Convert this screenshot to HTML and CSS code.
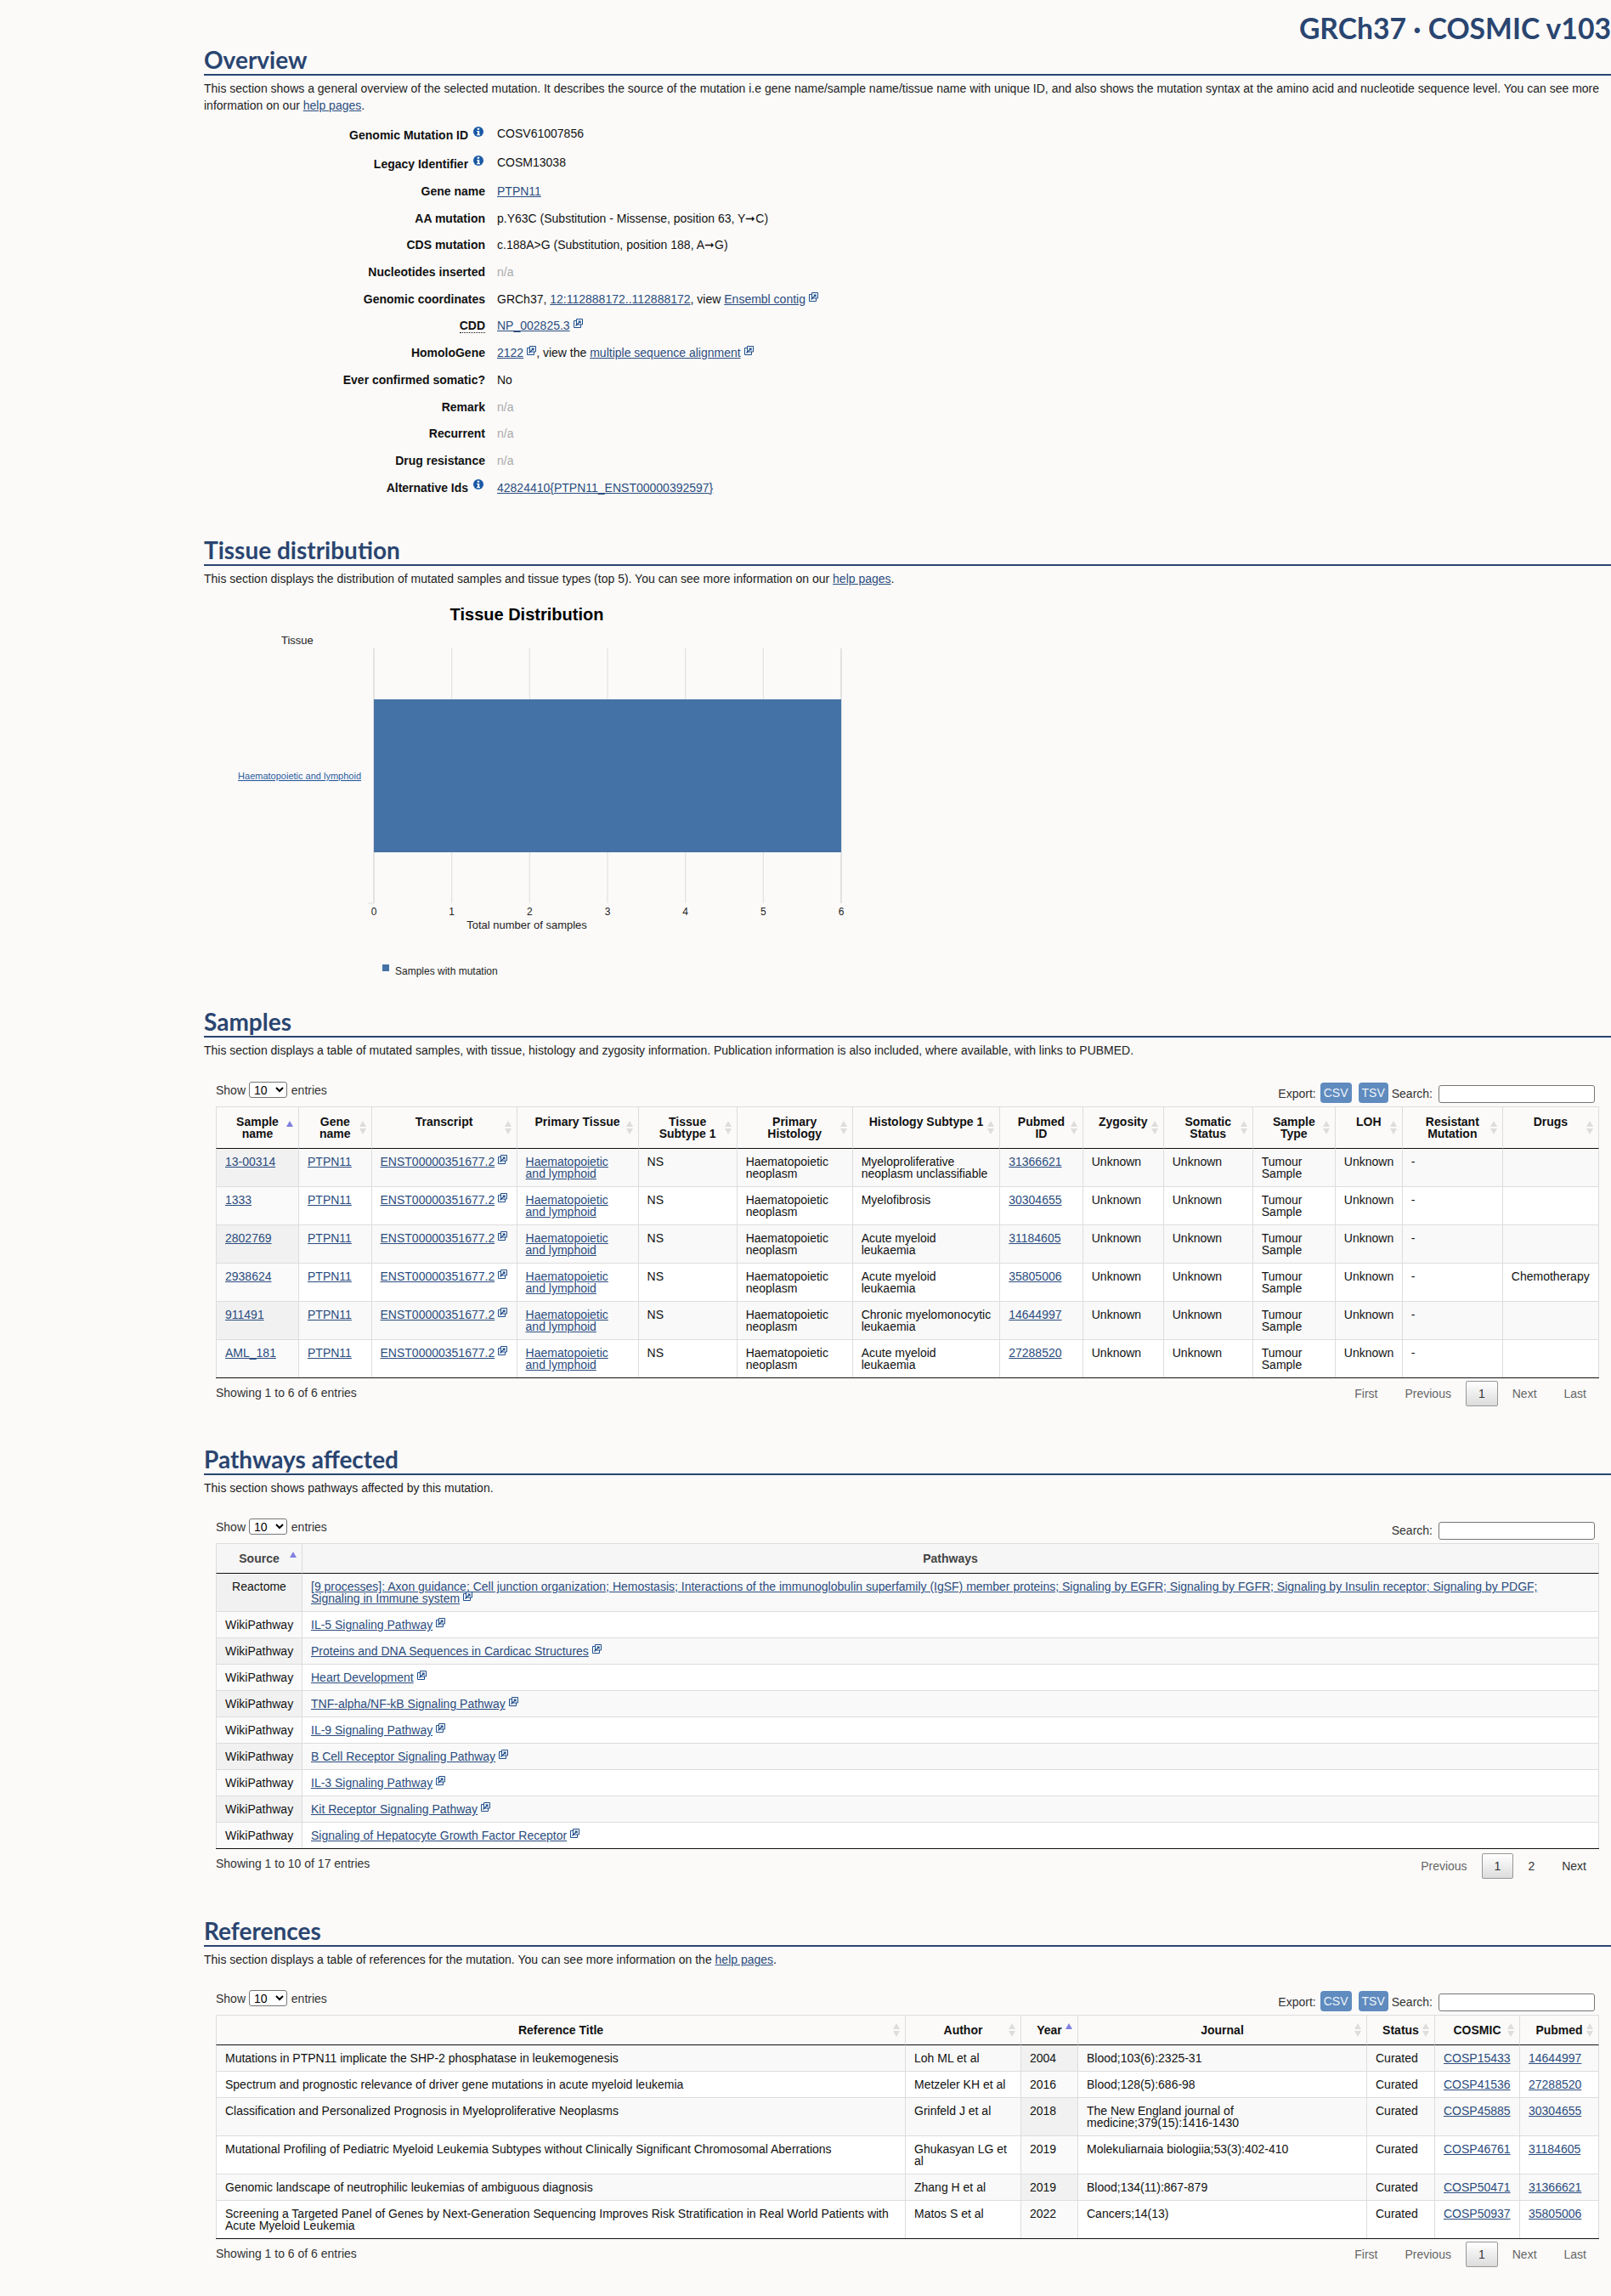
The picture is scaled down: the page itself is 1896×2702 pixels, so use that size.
FILE: index.html
```html
<!DOCTYPE html>
<html lang="en">
<head>
  <meta charset="UTF-8" />
  <title>COSMIC | Mutation overview</title>
  <link rel="stylesheet" href="styles.css">
</head>
<body>

<svg class="icon-defs" width="0" height="0">
  <symbol id="ext" viewBox="0 0 11 11">
    <path d="M5 2.5H.5v8h8V6" fill="none" stroke="#1f4f8c" stroke-width="1"/>
    <path d="M3.5 .5h7v6.5h-7z" fill="#fbfaf9" stroke="#1f4f8c" stroke-width="1"/>
    <path d="M2.5 8.5l5-5" fill="none" stroke="#1f4f8c" stroke-width="1.3"/>
    <path d="M5 2.4h3.6V6z" fill="#1f4f8c"/>
  </symbol>
  <symbol id="info" viewBox="0 0 12 12">
    <circle cx="6" cy="6" r="6" fill="#1a5aa5"/>
    <path d="M4.8 1.8h2.4v2H4.8zM4.2 4.9h3v4.2h.8v1.2H4.2V9.1h.8V6.1h-.8z" fill="#fff"/>
  </symbol>
</svg>

<div class="page">
  <div class="build">GRCh37 · COSMIC v103</div>

  <section>
    <h2>Overview</h2>
    <p class="intro">This section shows a general overview of the selected mutation. It describes the source of the mutation i.e gene name/sample name/tissue name with unique ID, and also shows the mutation syntax at the amino acid and nucleotide sequence level. You can see more information on our <a href="#">help pages</a>.</p>

    <dl class="facts">
      <dt class="tall">Genomic Mutation ID <svg class="info"><use href="#info"/></svg></dt>
      <dd class="tall">COSV61007856</dd>
      <dt class="tall">Legacy Identifier <svg class="info"><use href="#info"/></svg></dt>
      <dd class="tall">COSM13038</dd>
      <dt>Gene name</dt>
      <dd><a href="#">PTPN11</a></dd>
      <dt>AA mutation</dt>
      <dd>p.Y63C (Substitution - Missense, position 63, Y➞C)</dd>
      <dt>CDS mutation</dt>
      <dd>c.188A&gt;G (Substitution, position 188, A➞G)</dd>
      <dt>Nucleotides inserted</dt>
      <dd class="na">n/a</dd>
      <dt>Genomic coordinates</dt>
      <dd>GRCh37, <a href="#">12:112888172..112888172</a>, view <a href="#">Ensembl contig</a><svg class="ext"><use href="#ext"/></svg></dd>
      <dt><abbr>CDD</abbr></dt>
      <dd><a href="#">NP_002825.3</a><svg class="ext"><use href="#ext"/></svg></dd>
      <dt>HomoloGene</dt>
      <dd><a href="#">2122</a><svg class="ext"><use href="#ext"/></svg>, view the <a href="#">multiple sequence alignment</a><svg class="ext"><use href="#ext"/></svg></dd>
      <dt>Ever confirmed somatic?</dt>
      <dd>No</dd>
      <dt>Remark</dt>
      <dd class="na">n/a</dd>
      <dt>Recurrent</dt>
      <dd class="na">n/a</dd>
      <dt>Drug resistance</dt>
      <dd class="na">n/a</dd>
      <dt>Alternative Ids <svg class="info"><use href="#info"/></svg></dt>
      <dd><a href="#">42824410{PTPN11_ENST00000392597}</a></dd>
    </dl>
  </section>

  <section class="tissue-section">
    <h2>Tissue distribution</h2>
    <p class="intro">This section displays the distribution of mutated samples and tissue types (top 5). You can see more information on our <a href="#">help pages</a>.</p>

    <svg class="chart" viewBox="240 700 800 470" width="800" height="470">
      <text class="chart-title" x="620" y="730" text-anchor="middle">Tissue Distribution</text>
      <text class="chart-label" x="331" y="758">Tissue</text>
      <g class="grid">
        <line class="edge" x1="440" y1="763" x2="440" y2="1063"/>
        <line x1="531.7" y1="763" x2="531.7" y2="1063"/>
        <line x1="623.3" y1="763" x2="623.3" y2="1063"/>
        <line x1="715" y1="763" x2="715" y2="1063"/>
        <line x1="806.7" y1="763" x2="806.7" y2="1063"/>
        <line x1="898.3" y1="763" x2="898.3" y2="1063"/>
        <line class="edge" x1="990" y1="763" x2="990" y2="1063"/>
        <line x1="433" y1="1063" x2="440" y2="1063"/>
      </g>
      <rect class="bar" x="440" y="823" width="550" height="180"/>
      <a href="#"><text class="chart-link" x="425" y="917" text-anchor="end">Haematopoietic and lymphoid</text></a>
      <g class="chart-tick" text-anchor="middle">
        <text x="440" y="1077">0</text>
        <text x="531.7" y="1077">1</text>
        <text x="623.3" y="1077">2</text>
        <text x="715" y="1077">3</text>
        <text x="806.7" y="1077">4</text>
        <text x="898.3" y="1077">5</text>
        <text x="990" y="1077">6</text>
      </g>
      <text class="chart-label" x="620" y="1093" text-anchor="middle">Total number of samples</text>
      <rect class="bar" x="450" y="1135" width="8" height="8"/>
      <text class="chart-legend" x="465" y="1147">Samples with mutation</text>
    </svg>
  </section>

  <section class="samples-section">
    <h2>Samples</h2>
    <p class="intro">This section displays a table of mutated samples, with tissue, histology and zygosity information. Publication information is also included, where available, with links to PUBMED.</p>

    <div class="dt dt-samples">
      <div class="dt-top">
        <label class="dt-length">Show <select><option>10</option></select> entries</label>
        <div class="dt-tools">
          <span>Export:</span><a class="btn" href="#">CSV</a><a class="btn" href="#">TSV</a>
          <label class="dt-search">Search:</label><input type="text">
        </div>
      </div>
      <table class="samples-table">
        <colgroup><col><col><col><col><col><col><col><col><col><col><col><col><col><col></colgroup>
        <thead>
          <tr>
            <th class="sort-asc">Sample name</th><th class="sort">Gene name</th><th class="sort">Transcript</th><th class="sort">Primary Tissue</th><th class="sort">Tissue Subtype 1</th><th class="sort">Primary Histology</th><th class="sort">Histology Subtype 1</th><th class="sort">Pubmed<br>ID</th><th class="sort">Zygosity</th><th class="sort">Somatic Status</th><th class="sort">Sample Type</th><th class="sort">LOH</th><th class="sort">Resistant Mutation</th><th class="sort">Drugs</th>
          </tr>
        </thead>
        <tbody>
          <tr>
            <td class="sorted"><a href="#">13-00314</a></td><td><a href="#">PTPN11</a></td><td><a href="#">ENST00000351677.2</a><svg class="ext"><use href="#ext"/></svg></td><td><a href="#">Haematopoietic and lymphoid</a></td><td>NS</td><td>Haematopoietic neoplasm</td><td>Myeloproliferative neoplasm unclassifiable</td><td><a href="#">31366621</a></td><td>Unknown</td><td>Unknown</td><td>Tumour Sample</td><td>Unknown</td><td>-</td><td></td>
          </tr>
          <tr>
            <td class="sorted"><a href="#">1333</a></td><td><a href="#">PTPN11</a></td><td><a href="#">ENST00000351677.2</a><svg class="ext"><use href="#ext"/></svg></td><td><a href="#">Haematopoietic and lymphoid</a></td><td>NS</td><td>Haematopoietic neoplasm</td><td>Myelofibrosis</td><td><a href="#">30304655</a></td><td>Unknown</td><td>Unknown</td><td>Tumour Sample</td><td>Unknown</td><td>-</td><td></td>
          </tr>
          <tr>
            <td class="sorted"><a href="#">2802769</a></td><td><a href="#">PTPN11</a></td><td><a href="#">ENST00000351677.2</a><svg class="ext"><use href="#ext"/></svg></td><td><a href="#">Haematopoietic and lymphoid</a></td><td>NS</td><td>Haematopoietic neoplasm</td><td>Acute myeloid leukaemia</td><td><a href="#">31184605</a></td><td>Unknown</td><td>Unknown</td><td>Tumour Sample</td><td>Unknown</td><td>-</td><td></td>
          </tr>
          <tr>
            <td class="sorted"><a href="#">2938624</a></td><td><a href="#">PTPN11</a></td><td><a href="#">ENST00000351677.2</a><svg class="ext"><use href="#ext"/></svg></td><td><a href="#">Haematopoietic and lymphoid</a></td><td>NS</td><td>Haematopoietic neoplasm</td><td>Acute myeloid leukaemia</td><td><a href="#">35805006</a></td><td>Unknown</td><td>Unknown</td><td>Tumour Sample</td><td>Unknown</td><td>-</td><td>Chemotherapy</td>
          </tr>
          <tr>
            <td class="sorted"><a href="#">911491</a></td><td><a href="#">PTPN11</a></td><td><a href="#">ENST00000351677.2</a><svg class="ext"><use href="#ext"/></svg></td><td><a href="#">Haematopoietic and lymphoid</a></td><td>NS</td><td>Haematopoietic neoplasm</td><td>Chronic myelomonocytic leukaemia</td><td><a href="#">14644997</a></td><td>Unknown</td><td>Unknown</td><td>Tumour Sample</td><td>Unknown</td><td>-</td><td></td>
          </tr>
          <tr>
            <td class="sorted"><a href="#">AML_181</a></td><td><a href="#">PTPN11</a></td><td><a href="#">ENST00000351677.2</a><svg class="ext"><use href="#ext"/></svg></td><td><a href="#">Haematopoietic and lymphoid</a></td><td>NS</td><td>Haematopoietic neoplasm</td><td>Acute myeloid leukaemia</td><td><a href="#">27288520</a></td><td>Unknown</td><td>Unknown</td><td>Tumour Sample</td><td>Unknown</td><td>-</td><td></td>
          </tr>
        </tbody>
      </table>
      <div class="dt-bottom">
        <div class="dt-info">Showing 1 to 6 of 6 entries</div>
        <div class="pager">
          <a class="off" href="#">First</a><a class="off" href="#">Previous</a><a class="current" href="#">1</a><a class="off" href="#">Next</a><a class="off" href="#">Last</a>
        </div>
      </div>
    </div>
  </section>

  <section>
    <h2>Pathways affected</h2>
    <p class="intro">This section shows pathways affected by this mutation.</p>

    <div class="dt">
      <div class="dt-top">
        <label class="dt-length">Show <select><option>10</option></select> entries</label>
        <div class="dt-tools">
          <label class="dt-search">Search:</label><input type="text">
        </div>
      </div>
      <table class="pathways-table">
        <colgroup><col><col></colgroup>
        <thead>
          <tr><th class="sort-asc">Source</th><th>Pathways</th></tr>
        </thead>
        <tbody>
          <tr><td class="sorted">Reactome</td><td><a href="#">[9 processes]: Axon guidance; Cell junction organization; Hemostasis; Interactions of the immunoglobulin superfamily (IgSF) member proteins; Signaling by EGFR; Signaling by FGFR; Signaling by Insulin receptor; Signaling by PDGF;<br>Signaling in Immune system</a><svg class="ext"><use href="#ext"/></svg></td></tr>
          <tr><td class="sorted">WikiPathway</td><td><a href="#">IL-5 Signaling Pathway</a><svg class="ext"><use href="#ext"/></svg></td></tr>
          <tr><td class="sorted">WikiPathway</td><td><a href="#">Proteins and DNA Sequences in Cardicac Structures</a><svg class="ext"><use href="#ext"/></svg></td></tr>
          <tr><td class="sorted">WikiPathway</td><td><a href="#">Heart Development</a><svg class="ext"><use href="#ext"/></svg></td></tr>
          <tr><td class="sorted">WikiPathway</td><td><a href="#">TNF-alpha/NF-kB Signaling Pathway</a><svg class="ext"><use href="#ext"/></svg></td></tr>
          <tr><td class="sorted">WikiPathway</td><td><a href="#">IL-9 Signaling Pathway</a><svg class="ext"><use href="#ext"/></svg></td></tr>
          <tr><td class="sorted">WikiPathway</td><td><a href="#">B Cell Receptor Signaling Pathway</a><svg class="ext"><use href="#ext"/></svg></td></tr>
          <tr><td class="sorted">WikiPathway</td><td><a href="#">IL-3 Signaling Pathway</a><svg class="ext"><use href="#ext"/></svg></td></tr>
          <tr><td class="sorted">WikiPathway</td><td><a href="#">Kit Receptor Signaling Pathway</a><svg class="ext"><use href="#ext"/></svg></td></tr>
          <tr><td class="sorted">WikiPathway</td><td><a href="#">Signaling of Hepatocyte Growth Factor Receptor</a><svg class="ext"><use href="#ext"/></svg></td></tr>
        </tbody>
      </table>
      <div class="dt-bottom dt-bottom-low">
        <div class="dt-info">Showing 1 to 10 of 17 entries</div>
        <div class="pager">
          <a class="off" href="#">Previous</a><a class="current" href="#">1</a><a href="#">2</a><a href="#">Next</a>
        </div>
      </div>
    </div>
  </section>

  <section class="refs-section">
    <h2>References</h2>
    <p class="intro">This section displays a table of references for the mutation. You can see more information on the <a href="#">help pages</a>.</p>

    <div class="dt">
      <div class="dt-top">
        <label class="dt-length">Show <select><option>10</option></select> entries</label>
        <div class="dt-tools">
          <span>Export:</span><a class="btn" href="#">CSV</a><a class="btn" href="#">TSV</a>
          <label class="dt-search">Search:</label><input type="text">
        </div>
      </div>
      <table class="refs-table">
        <colgroup><col><col><col><col><col><col><col></colgroup>
        <thead>
          <tr>
            <th class="sort">Reference Title</th><th class="sort">Author</th><th class="sort-asc">Year</th><th class="sort">Journal</th><th class="sort">Status</th><th class="sort">COSMIC</th><th class="sort">Pubmed</th>
          </tr>
        </thead>
        <tbody>
          <tr><td>Mutations in PTPN11 implicate the SHP-2 phosphatase in leukemogenesis</td><td>Loh ML et al</td><td class="sorted">2004</td><td>Blood;103(6):2325-31</td><td>Curated</td><td><a href="#">COSP15433</a></td><td><a href="#">14644997</a></td></tr>
          <tr><td>Spectrum and prognostic relevance of driver gene mutations in acute myeloid leukemia</td><td>Metzeler KH et al</td><td class="sorted">2016</td><td>Blood;128(5):686-98</td><td>Curated</td><td><a href="#">COSP41536</a></td><td><a href="#">27288520</a></td></tr>
          <tr><td>Classification and Personalized Prognosis in Myeloproliferative Neoplasms</td><td>Grinfeld J et al</td><td class="sorted">2018</td><td>The New England journal of medicine;379(15):1416-1430</td><td>Curated</td><td><a href="#">COSP45885</a></td><td><a href="#">30304655</a></td></tr>
          <tr><td>Mutational Profiling of Pediatric Myeloid Leukemia Subtypes without Clinically Significant Chromosomal Aberrations</td><td>Ghukasyan LG et al</td><td class="sorted">2019</td><td>Molekuliarnaia biologiia;53(3):402-410</td><td>Curated</td><td><a href="#">COSP46761</a></td><td><a href="#">31184605</a></td></tr>
          <tr><td>Genomic landscape of neutrophilic leukemias of ambiguous diagnosis</td><td>Zhang H et al</td><td class="sorted">2019</td><td>Blood;134(11):867-879</td><td>Curated</td><td><a href="#">COSP50471</a></td><td><a href="#">31366621</a></td></tr>
          <tr><td>Screening a Targeted Panel of Genes by Next-Generation Sequencing Improves Risk Stratification in Real World Patients with Acute Myeloid Leukemia</td><td>Matos S et al</td><td class="sorted">2022</td><td>Cancers;14(13)</td><td>Curated</td><td><a href="#">COSP50937</a></td><td><a href="#">35805006</a></td></tr>
        </tbody>
      </table>
      <div class="dt-bottom">
        <div class="dt-info">Showing 1 to 6 of 6 entries</div>
        <div class="pager">
          <a class="off" href="#">First</a><a class="off" href="#">Previous</a><a class="current" href="#">1</a><a class="off" href="#">Next</a><a class="off" href="#">Last</a>
        </div>
      </div>
    </div>
  </section>
</div>

</body>
</html>
```

FILE: styles.css
```css
:root {
  --navy: #2a4570;
  --link: #2b4c7e;
  --line: #ddd;
  --page-bg: #fbfaf9;
}

* {
  box-sizing: border-box;
}

html, body {
  margin: 0;
  background: var(--page-bg);
  color: #111;
  font-family: "Liberation Sans", Arial, sans-serif;
  font-size: 14px;
}

a {
  color: var(--link);
}

.icon-defs {
  position: absolute;
}

.page {
  padding: 0 0 34px 240px;
}

.build {
  width: fit-content;
  height: 49px;
  margin-left: auto;
  padding-top: 18px;
  font-family: Lato, sans-serif;
  font-size: 33.7px;
  font-weight: 700;
  line-height: 31px;
  color: var(--navy);
  white-space: nowrap;
}

h2 {
  margin: 0;
  height: 40px;
  padding-top: 4px;
  border-bottom: 2px solid var(--navy);
  font-family: Lato, sans-serif;
  font-size: 28px;
  font-weight: 700;
  line-height: 34px;
  color: var(--navy);
}

section + section {
  margin-top: 41px;
}

section.tissue-section {
  margin-top: 35px;
}

section.samples-section {
  margin-top: 11px;
}

section.refs-section {
  margin-top: 40px;
}

.intro {
  margin: 5px 0 0;
  line-height: 20px;
  color: #222;
}

/* overview list */
.facts {
  display: grid;
  grid-template-columns: 331px 1fr;
  grid-template-rows: 34px 34px;
  grid-auto-rows: 31.7px;
  column-gap: 14px;
  margin: 9px 0 0;
}

.facts dt {
  font-weight: 700;
  text-align: right;
  padding-top: 6px;
  line-height: 16px;
}

.facts dd {
  margin: 0;
  padding-top: 5px;
  line-height: 18px;
}

.facts dt.tall {
  padding-top: 8px;
}

.facts dd.tall {
  padding-top: 5px;
}

.facts abbr {
  border-bottom: 1px dotted #111;
}

.facts .na {
  color: #aaa;
}

.info {
  width: 12px;
  height: 12px;
  margin: -4px 2px 0 2px;
  vertical-align: 3px;
}

.ext {
  width: 11px;
  height: 11px;
  margin: -3px 0 0 4px;
  vertical-align: 2px;
}

/* chart */
.chart {
  display: block;
  margin-top: 9px;
}

.chart text {
  font-family: "Liberation Sans", Arial, sans-serif;
}

.chart-title {
  font-size: 20px;
  font-weight: 700;
  fill: #000;
}

.chart-label {
  font-size: 13px;
  fill: #222;
}

.chart-tick {
  font-size: 12px;
  fill: #222;
}

.chart-legend {
  font-size: 12px;
  fill: #222;
}

.chart-link {
  font-size: 11px;
  fill: #2b5c9e;
  text-decoration: underline;
}

.grid line {
  stroke: #ddd;
  stroke-width: 1;
}

.grid line.edge {
  stroke-width: 1.6;
}

.bar {
  fill: #4572a6;
}

/* datatables */
.dt {
  width: 1628px;
  margin: 25px 0 0 14px;
}

.dt-samples {
  margin-top: 26px;
}

.dt-top {
  display: flex;
  justify-content: space-between;
  height: 30px;
  color: #333;
}

.dt-length {
  margin-top: 1px;
  line-height: 19px;
}

.dt-length select {
  width: 45px;
  height: 19px;
  padding: 0 0 0 1px;
  margin: 0 1px 0 0;
  border: 1px solid #767676;
  border-radius: 3px;
  background: #fff;
  font-family: "Liberation Sans", Arial, sans-serif;
  font-size: 14px;
}

.dt-tools {
  display: flex;
  align-items: flex-end;
  padding: 0 5px 4px 0;
}

.dt-tools span,
.dt-search {
  line-height: 20px;
  margin-bottom: 1px;
}

.btn {
  height: 24px;
  margin: 0 3px 0 5px;
  padding: 0 4px;
  border-radius: 4px;
  background: #5f8bbf;
  color: #eef3f9;
  line-height: 24px;
  text-decoration: none;
}

.btn + .btn {
  margin-left: 5px;
  margin-right: 4px;
}

.dt-search {
  margin-right: 7px;
}

.dt-tools input {
  width: 184px;
  height: 21px;
  border: 1px solid #767676;
  border-radius: 3px;
  background: #fff;
}

table {
  width: 1628px;
  table-layout: fixed;
  border-collapse: separate;
  border-spacing: 0;
  border-bottom: 1px solid #111;
}

th {
  position: relative;
  padding: 10px;
  border-top: 1px solid var(--line);
  border-right: 1px solid var(--line);
  border-bottom: 1px solid #111;
  font-weight: 700;
  line-height: 14px;
  text-align: center;
  vertical-align: top;
}

td {
  padding: 8px 10px;
  border-top: 1px solid var(--line);
  border-right: 1px solid var(--line);
  line-height: 14px;
  vertical-align: top;
  background: #fff;
}

tbody tr:first-child td {
  border-top: 0;
}

th:first-child,
td:first-child {
  border-left: 1px solid var(--line);
}

tbody tr:nth-child(odd) td {
  background: #f9f9f9;
}

tbody tr:nth-child(even) td.sorted {
  background: #fafafa;
}

tbody tr:nth-child(odd) td.sorted {
  background: #f1f1f1;
}

/* sort arrows */
.sort::before,
.sort::after,
.sort-asc::before {
  content: "";
  position: absolute;
  right: 6px;
  top: 50%;
  width: 0;
  height: 0;
  border-left: 4px solid transparent;
  border-right: 4px solid transparent;
}

.sort::before {
  margin-top: -8px;
  border-bottom: 7px solid #ddd;
}

.sort::after {
  margin-top: 1px;
  border-top: 7px solid #ddd;
}

.sort-asc::before {
  margin-top: -8px;
  border-bottom: 7px solid #8080e0;
}

.samples-table col:nth-child(1) { width: 98px; }
.samples-table col:nth-child(2) { width: 85.5px; }
.samples-table col:nth-child(3) { width: 171px; }
.samples-table col:nth-child(4) { width: 143px; }
.samples-table col:nth-child(5) { width: 116px; }
.samples-table col:nth-child(6) { width: 136px; }
.samples-table col:nth-child(7) { width: 173.5px; }
.samples-table col:nth-child(8) { width: 97.5px; }
.samples-table col:nth-child(9) { width: 95px; }
.samples-table col:nth-child(10) { width: 105px; }
.samples-table col:nth-child(11) { width: 97px; }
.samples-table col:nth-child(12) { width: 79px; }
.samples-table col:nth-child(13) { width: 118px; }
.samples-table col:nth-child(14) { width: 113px; }

.pathways-table col:nth-child(1) { width: 102px; }

.pathways-table th {
  background: #f6f6f6;
  color: #444;
}

.pathways-table td:first-child {
  text-align: center;
}

.refs-table col:nth-child(1) { width: 812px; }
.refs-table col:nth-child(2) { width: 136px; }
.refs-table col:nth-child(3) { width: 67px; }
.refs-table col:nth-child(4) { width: 340px; }
.refs-table col:nth-child(5) { width: 80px; }
.refs-table col:nth-child(6) { width: 100px; }
.refs-table col:nth-child(7) { width: 93px; }

.dt-bottom {
  display: flex;
  justify-content: space-between;
}

.dt-info {
  padding-top: 7px;
  line-height: 20px;
  color: #333;
}

.pager {
  display: flex;
  margin-top: 3px;
}

.dt-bottom-low .pager {
  margin-top: 5px;
}

.pager a {
  margin-left: 2px;
  padding: 4px 14px;
  border: 1px solid transparent;
  border-radius: 2px;
  line-height: 20px;
  color: #333;
  text-decoration: none;
}

.pager a.off {
  color: #666;
}

.pager a.current {
  border-color: #979797;
  background: linear-gradient(to bottom, #fff 0%, #dcdcdc 100%);
}
```
